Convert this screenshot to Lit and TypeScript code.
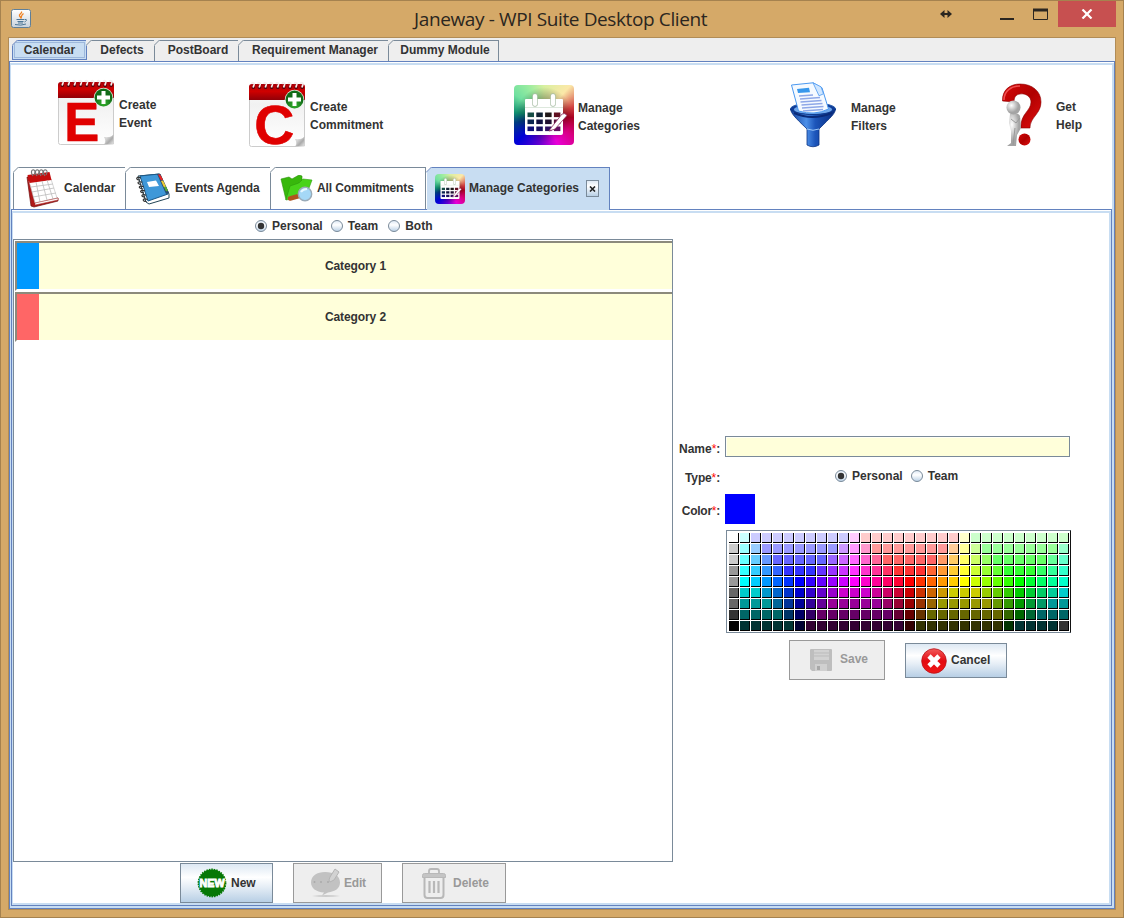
import { LitElement, html, svg, css } from "lit";
import { customElement, state } from "lit/decorators.js";
import { classMap } from "lit/directives/class-map.js";

/* Swatch table: one string per row, "colour*repeat" entries. */
const PALETTE = [
  "fff cff ccf*9 fcf fcc*9 ffc cfc*9",
  "ccc 9ff 9cf 99f*7 c9f f9f f9c f99*7 fc9 ff9 cf9 9f9*7 9fc",
  "ccc 6ff 6cf 69f 66f*5 96f c6f f6f f6c f69 f66*5 f96 fc6 ff6 cf6 9f6 6f6*5 6f9 6fc",
  "999 3ff 3cf 39f 36f 33f*3 63f 93f c3f f3f f3c f39 f36 f33*3 f63 f93 fc3 ff3 cf3 9f3 6f3 3f3*3 3f6 3f9 3fc",
  "999 0ff 0cf 09f 06f 03f 00f 30f 60f 90f c0f f0f f0c f09 f06 f03 f00 f30 f60 f90 fc0 ff0 cf0 9f0 6f0 3f0 0f0 0f3 0f6 0f9 0fc",
  "666 0cc*2 09c 06c 03c 00c 30c 60c 90c c0c*3 c09 c06 c03 c00 c30 c60 c90 cc0*3 9c0 6c0 3c0 0c0 0c3 0c6 0c9 0cc",
  "666 099*3 069 039 009 309 609 909*5 906 903 900 930 960 990*5 690 390 090 093 096 099*2",
  "333 066*4 036 006 306 606*7 603 600 630 660*7 360 060 063 066*3",
  "000 033*5 003 303*9 300 330*8 030 033*4 333",
].map((row) =>
  row.split(" ").flatMap((e) => {
    const [c, n] = e.split("*");
    return Array(Number(n ?? 1)).fill("#" + c) as string[];
  })
);

const plusBadge = svg`
  <circle cx="45.500" cy="17.500" r="9.700" fill="#e8f2e8"/>
  <circle cx="45.500" cy="17.500" r="9" fill="url(#green)"/>
  <path d="M43.500 11h4v4.500h4.500v4h-4.500v4.500h-4v-4.500h-4.500v-4h4.500z" fill="#fff"/>`;

const calendarLetter = (letter: string) => html`
  <svg class="spill" width="56" height="65" viewBox="0 0 56 65">
    <defs>
      <linearGradient id="red" x2="0" y2="1"><stop offset="0" stop-color="#a50008"/><stop offset=".45" stop-color="#d00000"/><stop offset="1" stop-color="#900008"/></linearGradient>
      <linearGradient id="page" x2="0" y2="1"><stop offset="0" stop-color="#fff"/><stop offset=".3" stop-color="#f1f1f1"/><stop offset="1" stop-color="#fff"/></linearGradient>
      <radialGradient id="green" cy=".8"><stop offset="0" stop-color="#35b52c"/><stop offset="1" stop-color="#116b18"/></radialGradient>
      <linearGradient id="curl" x2="1" y2="1"><stop offset="0" stop-color="#fff"/><stop offset=".6" stop-color="#aaa"/><stop offset="1" stop-color="#eee"/></linearGradient>
    </defs>
    <path d="M.5 4h55v51l-9 9.500h-44a2 2 0 0 1-2-2z" fill="url(#page)" stroke="#ccc"/>
    <path d="M46.500 64.500c2-3 1-6 0-7 3 .5 7 0 9-2.500v9z" fill="url(#curl)" stroke="#bbb" stroke-width=".5"/>
    <path d="M0 18V5a3 3 0 0 1 3-3h50a3 3 0 0 1 3 3v13z" fill="url(#red)"/>
    ${Array.from({ length: 9 }, (_, i) => svg`<circle cx="${4.4 + i * 6.1}" cy="5.500" r="1.600" fill="#50000a"/><path d="M${2.6 + i * 6.1} 2c.5-2 3-1.500 2.500.5l-1 3" fill="none" stroke="#f4eeee" stroke-width="1.700"/>`)}
    <text class="glyph" x="${letter === "E" ? 23.7 : 25.3}" y="${letter === "E" ? 61 : 61.7}" text-anchor="middle" textLength="${letter === "E" ? 35 : 40}" lengthAdjust="spacingAndGlyphs">${letter}</text>
    ${plusBadge}
  </svg>`;

const categoriesIcon = (size: number) => html`
  <div class="rainbow" style="width:${size}px;height:${size}px">
    <svg width=${size} height=${size} viewBox="0 0 60 60">
      <path d="M12 14h36a1 1 0 0 1 1 1v33a2 2 0 0 1-2 2H13a2 2 0 0 1-2-2V15a1 1 0 0 1 1-1z" fill="#fff"/>
      <path d="M11 22.500h38" stroke="#dde8dd" stroke-width="1"/>
      <path d="M21 11v8M39 11v8" stroke="#a9bfa6" stroke-width="5.500" stroke-linecap="round"/>
      <path d="M21 11v8M39 11v8" stroke="#fff" stroke-width="4.200" stroke-linecap="round"/>
      ${[0, 1, 2].map((r) => [0, 1, 2, 3].map((c) => svg`<rect x="${13.5 + c * 8.8}" y="${27.5 + r * 7}" width="6.500" height="4.600"
        fill="${[["#164d45", "#112233", "#201818", "#601020"], ["#0a2450", "#101040", "#201030", "#58103c"], ["#101078", "#181060", "#301060", "#601060"]][r][c]}"/>`))}
      <path d="M37 43l11-14q3-1.500 5 1.500L41 44l-6 2z" fill="#fff" stroke="#903060" stroke-width=".8"/>
    </svg>
  </div>`;

const funnelIcon = html`
  <svg width="46" height="66" viewBox="0 0 46 66">
    <defs><linearGradient id="blue"><stop offset="0" stop-color="#123f9c"/><stop offset=".35" stop-color="#4d90e8"/><stop offset=".55" stop-color="#1c55ba"/><stop offset="1" stop-color="#082c80"/></linearGradient></defs>
    <ellipse cx="23" cy="27" rx="22.500" ry="6" fill="#0f3c98" stroke="#2055a8"/>
    <ellipse cx="23" cy="27.500" rx="19" ry="4.500" fill="#6fa7ea"/>
    <path d="M1.500 3L23 .800l9 5L38.500 27q-14 7-30 2z" fill="#f5faff" stroke="#4a98f0"/>
    <path d="M23 .800l6 13 4.500-2-2.500-7z" fill="#cfe6ff" stroke="#4a98f0" stroke-width=".8"/>
    <path d="M7 7l12-1.200 1 4.500L8 11z" fill="#3797ec"/>
    <path d="M9 14l14-1M10 17l20-1.500M10.500 20l21-1.500M11.500 23l21-1.500M12 26l21.500-1.500M13 29l20-1.500" stroke="#8ea8e8" stroke-width="1.300"/>
    <path d="M.5 27c1 5 4 8 16.500 20v16q6 3.500 12 0V47C41 35 45 32 45.500 27 42 34.500 4 34.500 .500 27z" fill="url(#blue)" stroke="#0b3384" stroke-width=".8"/>
    <path d="M4 31q18 8 38 0" fill="none" stroke="#0a2a78" stroke-width="2"/>
    <path d="M17 47q6 2.500 12 0" fill="none" stroke="#9cc8fa"/>
  </svg>`;

const helpIcon = html`
  <svg width="40" height="65" viewBox="0 0 40 65">
    <defs>
      <linearGradient id="q" x2="1" y2="1"><stop offset="0" stop-color="#d50808"/><stop offset=".5" stop-color="#b00000"/><stop offset="1" stop-color="#e01010"/></linearGradient>
      <radialGradient id="man" cx=".35" cy=".35"><stop offset="0" stop-color="#fff"/><stop offset="1" stop-color="#a4a4a4"/></radialGradient>
    </defs>
    <path d="M.5 18C0 7 8 1 18 1c12 0 21 7 21 18 0 12-11 15-11 26h-9c-1-14 10-17 10-26 0-5-5-9-11-8-4 .5-6 3-6 8z" fill="url(#q)" stroke="#8c0000" stroke-width=".6"/>
    <path d="M2 17C2 8 9 3 18 3" fill="none" stroke="#f05050" stroke-width="1.500"/>
    <circle cx="22.500" cy="56.500" r="6" fill="url(#q)"/>
    <path d="M8 31c3-2 9-1 10 2l1 12-4 7-1 11H5l4-3 0-12-2-8z" fill="url(#man)"/>
    <path d="M13 45l-2 17M9 36l5 4 4-5" fill="none" stroke="#999" stroke-width="1"/>
    <circle cx="11.500" cy="24.500" r="7" fill="url(#man)"/>
  </svg>`;

const tabCalendarIcon = html`
  <svg width="34" height="39" viewBox="0 0 34 39">
    <path d="M1 8l4 29 3 1 24-6v-3L9 32 4 8z" fill="#b01818" stroke="#701010" stroke-width=".7"/>
    <path d="M3 12l22-2 6 19-22 5z" fill="#fff" stroke="#bbb" stroke-width=".6"/>
    <path d="M1.500 6l22-3 2 8-22 3z" fill="#c40f0f"/>
    <path d="M5 18l22-3M6 23l22-4M7 28l23-4M10 13l4 20M16 12l5 19M21 11l6 19" stroke="#bbb" stroke-width=".8"/>
    <path d="M9 34l23-5v2L9 36z" fill="#fff" stroke="#a33" stroke-width=".5"/>
    ${[7, 11, 15, 19].map((x) => svg`<path d="M${x} 7c-3-4-1-7 1-6s1 3 0 5" fill="none" stroke="#777" stroke-width="1.200"/>`)}
  </svg>`;

const notebookIcon = html`
  <svg width="35" height="32" viewBox="0 0 35 32">
    <path d="M3 3l8 26 3 2 20-6v-4L25 1z" fill="#fff" stroke="#245" stroke-width="1"/>
    <path d="M5 3l19-2 9 20-20 7z" fill="#3f98d8" stroke="#1a5888" stroke-width="1"/>
    <path d="M22 1l3 0 9 19-3 1z" fill="#274d70"/><path d="M23 1.500l2 0 3 5-2 1z" fill="#e22"/><path d="M26 8l2-.5 3 6-2 1z" fill="#ec3"/><path d="M29 14l2-.5 2 4-2 1z" fill="#5a3"/>
    <path d="M12 9l9-1.500 3 5.500-10 1z" fill="#fff"/>
    ${[0, 1, 2, 3, 4, 5].map((i) => svg`<path d="M${6 + i * 1.3} ${5 + i * 4.3}c-5-2-6 2-1 2" fill="none" stroke="#333" stroke-width="1.200"/>`)}
  </svg>`;

const folderIcon = html`
  <svg width="33" height="27" viewBox="0 0 33 27">
    <path d="M1 4l8-2 3 2 7-4 3 1 0 5-12 8-4 11z" fill="#38b80c" stroke="#2a9008" stroke-width=".6"/>
    <path d="M6 25l4-14 9-3 4-4 9 1-6 16z" fill="#48d31a" stroke="#2c9d0a" stroke-width=".6"/>
    <path d="M10 23.500l9-2.500" stroke="#b05420" stroke-width="4.500" stroke-linecap="round"/>
    <circle cx="25" cy="19" r="6.700" fill="#a5d8f6" stroke="#9aabb8" stroke-width="1.400"/>
    <path d="M21 17q2-3 6-3" fill="none" stroke="#e8f8ff" stroke-width="2"/>
  </svg>`;

const javaIcon = html`
  <svg width="20" height="19" viewBox="0 0 20 19">
    <defs><linearGradient id="jb" x2="0" y2="1"><stop offset="0" stop-color="#fff"/><stop offset="1" stop-color="#c8d2dc"/></linearGradient></defs>
    <rect x=".5" y=".5" width="19" height="18" rx="2" fill="url(#jb)" stroke="#5f7f98"/>
    <path d="M10.500 2.500c1 2-3 2.500-2 4.500l1.500 2c1-2-.5-2 2.500-4.500" fill="none" stroke="#f08020" stroke-width="1.300"/>
    <path d="M5.500 10.500h8M6.500 12.500h6M7 14h5M4 15.500q6 1.500 11-.5M14 10.500c3-.5 1 2-.5 2.500" fill="none" stroke="#4d7796" stroke-width="1"/>
  </svg>`;

const newIcon = html`
  <svg width="30" height="30" viewBox="0 0 30 30">
    <circle cx="15" cy="15" r="13.500" fill="#067806" stroke="#067806" stroke-width="1.800" stroke-dasharray="1.500 1"/>
    <text class="new" x="15" y="18.800" text-anchor="middle" textLength="25" lengthAdjust="spacingAndGlyphs">NEW</text>
  </svg>`;

const editIcon = html`
  <svg width="32" height="30" viewBox="0 0 32 30">
    <path d="M2 28q14-2 28 0-14 2-28 0z" fill="#ccc"/>
    <path d="M15 4c9 0 15 4 15 10.500 0 6-5 9-12 10l-6 3 2-3C6 24 1 20 1 14.500 1 8 7 4 15 4z" fill="#c2c2c2"/>
    <path d="M19 12l1-3 5-8 4 3-5 8-4 2z" fill="#d2d2d2" stroke="#b4b4b4"/>
    <circle cx="4.500" cy="14" r="1" fill="#aaa"/><circle cx="11" cy="14" r="1" fill="#aaa"/><circle cx="18" cy="14" r="1" fill="#aaa"/>
  </svg>`;

const trashIcon = html`
  <svg width="26" height="31" viewBox="0 0 26 31" fill="none" stroke="#b8b8b8">
    <path d="M8 5V3q0-2 2-2h6q2 0 2 2v2" stroke-width="1.800"/>
    <path d="M1.500 9.500V7.500q0-2 2-2h19q2 0 2 2v2z" fill="#c4c4c4"/>
    <path d="M3.500 10v17q0 3 3 3h13q3 0 3-3V10" stroke-width="2"/>
    <path d="M8.500 13v12M13 13v12M17.500 13v12" stroke-width="2.200"/>
  </svg>`;

const saveIcon = html`
  <svg width="22" height="22" viewBox="0 0 22 22">
    <path d="M1 0h20a1 1 0 0 1 1 1v20a1 1 0 0 1-1 1H2l-2-2V1a1 1 0 0 1 1-1z" fill="#bebebe"/>
    <path d="M4 1h15v10H4z" fill="#d2d2d2"/><path d="M4 4h15M4 7h15" stroke="#bbb"/>
    <path d="M5 15h12v7H5z" fill="#d0d0d0"/><path d="M7 17h3v4H7z" fill="#a8a8a8"/>
  </svg>`;

const cancelIcon = html`
  <svg width="26" height="26" viewBox="0 0 26 26">
    <defs><linearGradient id="rc" x2="0" y2="1"><stop offset="0" stop-color="#f25a5a"/><stop offset=".5" stop-color="#e30b12"/><stop offset="1" stop-color="#f01818"/></linearGradient></defs>
    <circle cx="13" cy="13" r="12.300" fill="url(#rc)" stroke="#b8141a" stroke-width=".8"/>
    <path d="M8 8l10 10M18 8l-10 10" stroke="#fff" stroke-width="4.600"/>
  </svg>`;

@customElement("swing-radio")
class SwingRadio extends LitElement {
  static properties = { label: {}, checked: { type: Boolean } };
  declare label: string;
  declare checked: boolean;
  static styles = css`
    :host { display: flex; align-items: center; height: 14px; }
    svg { display: block; margin-right: 5px; }
  `;
  render() {
    return html`<svg width="12" height="12" viewBox="0 0 12 12">
        <defs><linearGradient id="g" x2="0" y2="1"><stop offset="0" stop-color="#dbe7f4"/><stop offset=".4" stop-color="#fff"/><stop offset="1" stop-color="#b8cfe5"/></linearGradient></defs>
        <circle cx="6" cy="6" r="5.500" fill="url(#g)" stroke="#7a8a99"/>
        ${this.checked ? svg`<circle cx="6" cy="6" r="3.200" fill="#333"/>` : ""}
      </svg><span>${this.label}</span>`;
  }
}

@customElement("app-root")
class AppRoot extends LitElement {
  @state() private categories = [
    { name: "Category 1", color: "#0099ff" },
    { name: "Category 2", color: "#ff6666" },
  ];

  static styles = css`
    :host { display: block; font: bold 12px/14px "Liberation Sans", Arial, sans-serif; color: #333; }
    * { box-sizing: border-box; }
    svg { display: block; flex: none; }
    .spill { overflow: visible; }
    .window { width: 1124px; height: 918px; border: 1px solid #a5824f; background: #d5a968; padding: 0 7px 7px; overflow: hidden; }
    .titlebar { height: 36px; display: grid; grid-template-columns: 403px 1fr auto; padding-left: 3px; }
    .java { padding-top: 8px; }
    .title { font: 400 19px/24px "Open Sans", sans-serif; letter-spacing: -.38px; color: #2b2620; padding-top: 6px; white-space: nowrap; }
    .controls { display: flex; justify-content: flex-end; }
    .close { width: 58px; height: 26px; background: #c75050; display: grid; place-items: center; }
    .frame { height: 873px; border: 1px solid #b18c56; background: #eee; display: flex; flex-direction: column; }

    .tabs { display: flex; align-items: flex-end; position: relative; flex: none; }
    .tab { position: relative; border: solid #7a8a99; border-width: 1px 1px 0 0; display: flex; align-items: center; white-space: nowrap; flex: none; }
    .tab svg.corner { position: absolute; left: -1px; top: -1px; }
    .main { height: 24px; padding-left: 3px; border-bottom: 1px solid #6382bf; }
    .main .tab { height: 21px; padding: 0 0 2px 3px; justify-content: center; }
    .main .active { background: #c8ddf2; border: 1px solid #6382bf; height: 20px; margin-bottom: 1px; outline: 1px solid #9db8dc; outline-offset: -3px; padding: 0; }

    .pane { flex: 1; background: #fff; border: solid #6382bf; border-width: 0 1px 1px; display: flex; flex-direction: column; min-height: 0; }
    .pane-in { flex: 1; margin-top: 1px; border: solid #c8ddf2; border-width: 2px 2px 2px 1px; display: flex; flex-direction: column; min-height: 0; }
    .toolbar { height: 102px; flex: none; display: grid; grid-template-columns: 191px 265px 276px 212px 1fr; padding-left: 47px; line-height: 18px; align-items: start; }
    .tool { display: flex; }
    .glyph { font: bold 56px "Liberation Sans", sans-serif; fill: #e00000; stroke: #e00000; stroke-width: .6; }
    .tool p { margin: 0; }
    .t1 { padding-top: 15px; } .t1 p { margin: 16px 0 0 5px; }
    .t2 { padding-top: 17px; } .t2 p { margin: 16px 0 0 5px; }
    .t3 { padding-top: 20px; } .t3 p { margin: 14px 0 0 4px; }
    .t4 { padding-top: 17px; } .t4 p { margin: 17px 0 0 15px; }
    .t5 { padding-top: 18px; } .t5 p { margin: 15px 0 0 14px; }
    .rainbow { flex: none; border-radius: 4px; overflow: hidden;
      background: radial-gradient(circle, #000a 0, #0000 66%), conic-gradient(from 0deg, #d8f0a0, #fbe8a8 42deg, #d04040 75deg, #a80020 95deg, #d80080 125deg, #e800d8 155deg, #6000d0 190deg, #0000d8 225deg, #003c80 255deg, #109070 275deg, #70e0a0 305deg, #98eca0 330deg, #d8f0a0); }

    .sub { height: 43px; padding-left: 2px; border-bottom: 1px solid #6382bf; }
    .sub .tab { height: 42px; background: #fff; }
    .sub .first { border-left: 1px solid #7a8a99; }
    .sub .active { background: #c8ddf2; border-color: #6382bf; height: 43px; margin-bottom: -1px; margin-left: 1px; padding-bottom: 1px; }
    .sub span { padding-bottom: 2px; }
    .tight { letter-spacing: -.13px; }
    .x { width: 13px; height: 17px; border: 1px solid #7a8a99; background: linear-gradient(#dfe9f4, #fff 35%, #b8cfe5); display: grid; place-items: center; }

    .work { flex: 1; min-height: 0; border: solid #6382bf; border-width: 0 1px 1px; padding-top: 1px; }
    .work-in { height: 100%; border: solid #c8ddf2; border-width: 2px 2px 2px 1px; display: grid; grid-template-columns: 660px 1fr; }
    .left { display: flex; flex-direction: column; }
    .radios { display: flex; gap: 8px; }
    .filter { height: 26px; padding: 6px 0 0 242px; }
    .filter swing-radio:last-child { margin-left: 2px; }
    .list { height: 623px; flex: none; border: 1px solid #7a8a99; padding: 1px 0 0 1px; display: flex; flex-direction: column; gap: 1px; }
    .cat { height: 50px; border: 2px solid; border-color: #8c8a7c #fff #fff #8c8a7c; border-right: 0; background: #ffffda; display: flex; align-items: center; background-clip: padding-box; flex: none; }
    .chip { width: 22px; height: 46px; }
    .cat span { flex: 1; text-align: center; letter-spacing: -.1px; }
    .buttons { display: flex; gap: 20px; padding: 1px 0 0 167px; }
    .btn { height: 40px; border: 1px solid #7a8a99; background: linear-gradient(#dde8f3 0, #fff 35%, #e6eef6 60%, #b8cfe5 100%); display: flex; align-items: center; font: inherit; color: inherit; padding: 0; }
    .off { background: #eee; border-color: #999; color: #999; }
    .new { font: bold 10.500px "Liberation Sans", sans-serif; fill: #fff; stroke: #fff; stroke-width: .9; }
    .b-new { width: 93px; padding-left: 16px; gap: 4px; }
    .b-edit { width: 89px; padding-left: 16px; gap: 2px; letter-spacing: -.2px; }
    .b-del { width: 104px; padding-left: 18px; gap: 6px; }

    .form { padding: 223px 0 0 6px; }
    .row { display: flex; }
    .row label { width: 41px; text-align: right; margin-right: 5px; white-space: nowrap; }
    em { color: #f00; font-style: normal; font-weight: 400; }
    .input { width: 345px; height: 21px; background: #ffffda; border: 1px solid #7a8a99; box-shadow: inset 1px 1px #fffff4; }
    .r1 { height: 33px; } .r1 label { padding-top: 6px; }
    .r2 { height: 25px; } .r2 label { padding-top: 2px; letter-spacing: -.15px; } .r2 .radios { margin-left: 110px; }
    .r3 { height: 36px; } .r3 label { padding-top: 10px; letter-spacing: -.25px; }
    .current { width: 30px; height: 30px; background: #00f; }
    .palette { margin-left: 47px; width: 345px; height: 103px; border: 1px solid #7a8a99; border-right-color: #111; padding: 2px; display: grid; grid-template-columns: repeat(31, 10px); grid-auto-rows: 10px; gap: 1px; }
    .palette i { border: solid #000; border-width: 0 1px 1px 0; }
    .actions { display: flex; align-items: center; gap: 20px; padding: 7px 0 0 110px; }
    .actions span { padding-bottom: 2px; }
    .b-save { width: 96px; padding-left: 20px; gap: 8px; }
    .b-cancel { width: 102px; height: 35px; padding-left: 15px; gap: 4px; margin-top: 1px; }
  `;

  private corner(active = false, line = "#7a8a99", back = "#fff") {
    return html`<svg class="corner" width="6" height="6" viewBox="0 0 6 6">
      <path d="M0 0h6L0 6z" fill=${back}/><path d="M0 5.500L5.500 0" stroke=${active ? "#6382bf" : line} stroke-width="1"/></svg>`;
  }

  private mainTab(label: string, width: number, active = false) {
    return html`<div class=${classMap({ tab: true, active })} style="width:${width}px">${this.corner(active, "#7a8a99", "#eee")}${label}</div>`;
  }

  render() {
    return html`<div class="window">
      <div class="titlebar">
        <div class="java">${javaIcon}</div>
        <div class="title">Janeway - WPI Suite Desktop Client</div>
        <div class="controls">
          <svg width="118" height="26" viewBox="0 0 118 26" fill="none" stroke="#2b2620">
            <path d="M2 13h8" stroke-width="2"/><path d="M4.500 9L0 13l4.500 4zM7.500 9l4.500 4-4.500 4z" fill="#2b2620" stroke="none"/>
            <path d="M60 18h14" stroke-width="2"/><path d="M93.500 8v10.500h14V8" /><path d="M93 9h15" stroke-width="3"/>
          </svg>
          <div class="close"><svg width="12" height="10" viewBox="0 0 12 10"><path d="M1.500.500l9 9M10.500.500l-9 9" stroke="#fff" stroke-width="2.200"/></svg></div>
        </div>
      </div>
      <div class="frame">
        <div class="tabs main">
          ${this.mainTab("Calendar", 75, true)}${this.mainTab("Defects", 68)}${this.mainTab("PostBoard", 84)}${this.mainTab("Requirement Manager", 150)}${this.mainTab("Dummy Module", 110)}
        </div>
        <div class="pane"><div class="pane-in">
          <div class="toolbar">
            <div class="tool t1">${calendarLetter("E")}<p>Create<br>Event</p></div>
            <div class="tool t2">${calendarLetter("C")}<p>Create<br>Commitment</p></div>
            <div class="tool t3">${categoriesIcon(60)}<p>Manage<br>Categories</p></div>
            <div class="tool t4">${funnelIcon}<p>Manage<br>Filters</p></div>
            <div class="tool t5">${helpIcon}<p>Get<br>Help</p></div>
          </div>
          <div class="tabs sub">
            <div class="tab first" style="width:113px;padding-left:12px;gap:4px">${this.corner()}${tabCalendarIcon}<span>Calendar</span></div>
            <div class="tab" style="width:145px;padding-left:9px;gap:5px">${this.corner()}${notebookIcon}<span class="tight">Events Agenda</span></div>
            <div class="tab" style="width:155px;padding-left:9px;gap:4px">${this.corner()}${folderIcon}<span class="tight">All Commitments</span></div>
            <div class="tab active" style="width:183px;padding-left:8px;gap:4px">${this.corner(true)}${categoriesIcon(30)}<span>Manage Categories</span>
              <div class="x" style="margin-left:3px"><svg width="7" height="6" viewBox="0 0 7 6"><path d="M1 .500l5 5M6 .500l-5 5" stroke="#222" stroke-width="1.600"/></svg></div></div>
          </div>
          <div class="work"><div class="work-in">
            <div class="left">
              <div class="radios filter">
                <swing-radio label="Personal" checked></swing-radio><swing-radio label="Team"></swing-radio><swing-radio label="Both"></swing-radio>
              </div>
              <div class="list">
                ${this.categories.map((c) => html`<div class="cat"><div class="chip" style="background:${c.color}"></div><span>${c.name}</span></div>`)}
              </div>
              <div class="buttons">
                <button class="btn b-new">${newIcon}New</button>
                <button class="btn off b-edit">${editIcon}Edit</button>
                <button class="btn off b-del">${trashIcon}Delete</button>
              </div>
            </div>
            <div class="form">
              <div class="row r1"><label>Name<em>*</em>:</label><div class="input"></div></div>
              <div class="row r2"><label>Type<em>*</em>:</label><div class="radios"><swing-radio label="Personal" checked></swing-radio><swing-radio label="Team"></swing-radio></div></div>
              <div class="row r3"><label>Color<em>*</em>:</label><div class="current"></div></div>
              <div class="palette">${PALETTE.flat().map((c) => html`<i style="background:${c}"></i>`)}</div>
              <div class="actions">
                <button class="btn off b-save">${saveIcon}<span>Save</span></button>
                <button class="btn b-cancel">${cancelIcon}<span>Cancel</span></button>
              </div>
            </div>
          </div></div>
        </div></div>
      </div>
    </div>`;
  }
}
